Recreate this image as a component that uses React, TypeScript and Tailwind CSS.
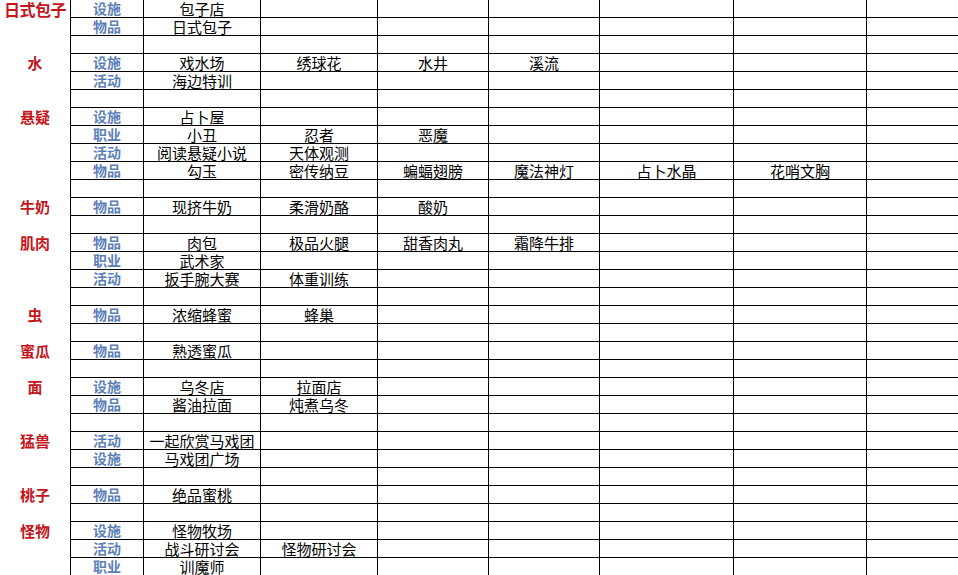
import React from 'react';

type Row = { cat?: string; type?: string; items?: string[] };

// One entry per sheet row; rows without a type are the blank spacer rows.
const rows: Row[] = [
  { cat: '日式包子', type: '设施', items: ['包子店'] },
  { type: '物品', items: ['日式包子'] },
  {},
  { cat: '水', type: '设施', items: ['戏水场', '绣球花', '水井', '溪流'] },
  { type: '活动', items: ['海边特训'] },
  {},
  { cat: '悬疑', type: '设施', items: ['占卜屋'] },
  { type: '职业', items: ['小丑', '忍者', '恶魔'] },
  { type: '活动', items: ['阅读悬疑小说', '天体观测'] },
  { type: '物品', items: ['勾玉', '密传纳豆', '蝙蝠翅膀', '魔法神灯', '占卜水晶', '花哨文胸'] },
  {},
  { cat: '牛奶', type: '物品', items: ['现挤牛奶', '柔滑奶酪', '酸奶'] },
  {},
  { cat: '肌肉', type: '物品', items: ['肉包', '极品火腿', '甜香肉丸', '霜降牛排'] },
  { type: '职业', items: ['武术家'] },
  { type: '活动', items: ['扳手腕大赛', '体重训练'] },
  {},
  { cat: '虫', type: '物品', items: ['浓缩蜂蜜', '蜂巢'] },
  {},
  { cat: '蜜瓜', type: '物品', items: ['熟透蜜瓜'] },
  {},
  { cat: '面', type: '设施', items: ['乌冬店', '拉面店'] },
  { type: '物品', items: ['酱油拉面', '炖煮乌冬'] },
  {},
  { cat: '猛兽', type: '活动', items: ['一起欣赏马戏团'] },
  { type: '设施', items: ['马戏团广场'] },
  {},
  { cat: '桃子', type: '物品', items: ['绝品蜜桃'] },
  {},
  { cat: '怪物', type: '设施', items: ['怪物牧场'] },
  { type: '活动', items: ['战斗研讨会', '怪物研讨会'] },
  { type: '职业', items: ['训魔师'] },
];

const dataCols = ['w-[117px]', 'w-[117px]', 'w-[111px]', 'w-[111px]', 'w-[134px]', 'w-[133px]'];

const font = { fontFamily: '"SimSun", "Noto Sans CJK SC", "Liberation Sans", sans-serif' };

export default function App() {
  return (
    <div className="w-[958px] h-[575px] overflow-hidden bg-white" style={font}>
      {rows.map((row, i) => (
        <div key={i} className="flex h-[18px]">
          <div
            className={`w-[71px] shrink-0 border-r border-black flex items-center justify-center pb-px font-bold text-[#c4161c] leading-none whitespace-nowrap ${
              row.cat && row.cat.length > 2 ? 'text-[16px] tracking-[-0.5px]' : 'text-[15px]'
            }`}
          >
            {row.cat}
          </div>
          <div className="w-[73px] shrink-0 border-r border-b border-black flex items-center justify-center pb-px text-[14px] font-bold text-[#5b80b8] leading-none">
            {row.type}
          </div>
          {dataCols.map((w, c) => (
            <div
              key={c}
              className={`${w} shrink-0 border-r border-b border-black flex items-center justify-center pb-px text-[15px] text-black leading-none whitespace-nowrap`}
            >
              {row.items?.[c]}
            </div>
          ))}
          <div className="flex-1 border-b border-black" />
        </div>
      ))}
    </div>
  );
}
